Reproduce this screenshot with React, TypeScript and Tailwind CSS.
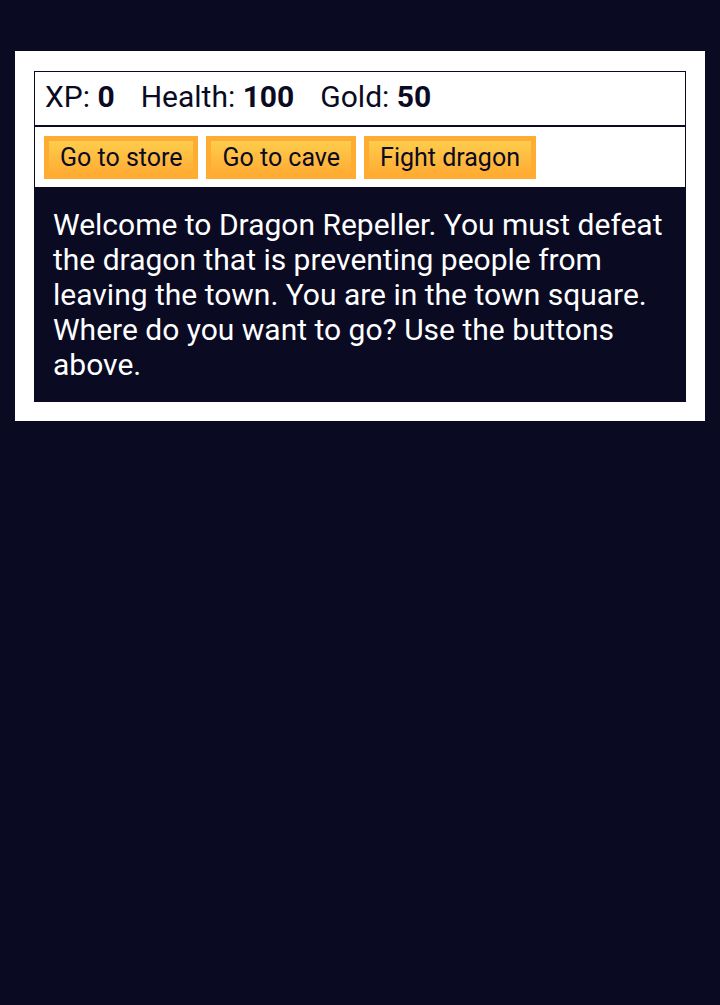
import React from "react";

interface StatProps {
  label: string;
  value: number;
}

const stats: StatProps[] = [
  { label: "XP", value: 0 },
  { label: "Health", value: 100 },
  { label: "Gold", value: 50 },
];

const actions = ["Go to store", "Go to cave", "Fight dragon"];

export default function App() {
  return (
    <div
      className="min-h-[1005px] w-full bg-[#0a0a23] pt-[51px] px-[15px]"
      style={{ fontFamily: "Roboto, 'Noto Sans', sans-serif" }}
    >
      {/* Game panel */}
      <div className="bg-white px-[19px] pt-[20px] pb-[19px]">
        {/* Stats */}
        <div className="border border-b-2 border-[#0a0a23] px-[10px] pt-[7px] pb-[11px] text-[30px] leading-[35px] text-[#0a0a23]">
          {stats.map(({ label, value }) => (
            <span key={label} className="pr-[26px]">
              {label}: <strong className="font-bold">{value}</strong>
            </span>
          ))}
        </div>

        {/* Controls */}
        <div className="flex gap-[8px] border border-t-0 border-[#0a0a23] px-[9px] pt-[9px] pb-[8px]">
          {actions.map((a) => (
            <button
              key={a}
              className="h-[43px] border-[5px] border-[#feac32] bg-gradient-to-b from-[#fecc4c] to-[#ffac33] px-[11px] text-[25px] leading-[29px] text-[#0a0a23]"
            >
              {a}
            </button>
          ))}
        </div>

        {/* Text */}
        <div className="bg-[#0a0a23] px-[19px] pt-[19px] pb-[20px] text-[30px] leading-[35px] text-white">
          Welcome to Dragon Repeller. You must defeat the dragon that is
          preventing people from leaving the town. You are in the town square.
          Where do you want to go? Use the buttons above.
        </div>
      </div>
    </div>
  );
}
